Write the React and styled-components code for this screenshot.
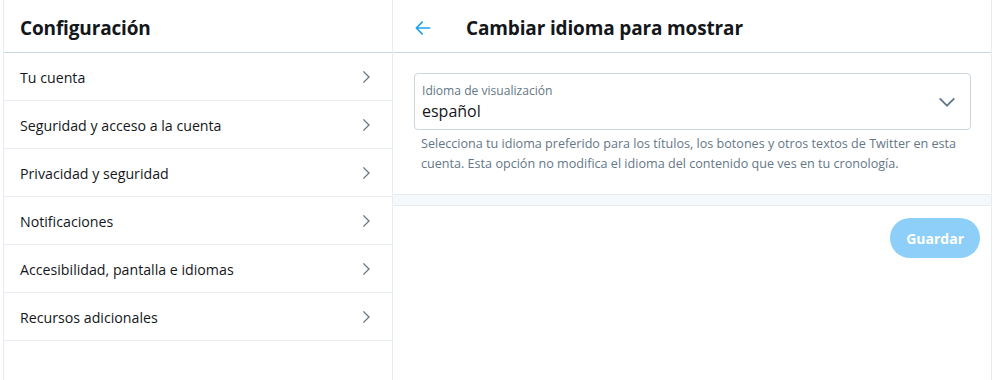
import React from 'react'
import styled, { createGlobalStyle } from 'styled-components'

const GlobalStyle = createGlobalStyle`
  html, body {
    margin: 0;
    padding: 0;
    background: #fff;
  }
  body {
    font-family: "Open Sans", "Noto Sans", sans-serif;
    color: #14171a;
  }
`

const Page = styled.div`
  display: flex;
  height: 380px;
  padding-left: 3px;
  overflow: hidden;
`

const Sidebar = styled.nav`
  width: 388px;
  border-left: 1px solid #e6ecf0;
  border-right: 1px solid #e6ecf0;
  display: flex;
  flex-direction: column;
`

const Main = styled.main`
  width: 598px;
  border-right: 1px solid #e6ecf0;
  display: flex;
  flex-direction: column;
`

const Header = styled.header`
  height: 53px;
  box-sizing: border-box;
  border-bottom: 1px solid #ccd6dd;
  display: flex;
  align-items: center;
  padding: 4px ${p => p.$pad || 16}px 0;
  gap: 33px;
`

const Title = styled.h2`
  margin: 0;
  font-size: 19px;
  font-weight: 700;
  letter-spacing: -0.15px;
  color: #14171a;
`

const BackButton = styled.button`
  border: 0;
  background: none;
  padding: 0;
  display: flex;
  align-items: center;
  color: #1da1f2;
  cursor: pointer;
`

const NavRow = styled.a`
  height: 48px;
  box-sizing: border-box;
  border-bottom: 1px solid #e6ecf0;
  display: flex;
  align-items: center;
  justify-content: space-between;
  padding: 1px 17px 0 16px;
  font-size: 14.2px;
  color: #14171a;
  text-decoration: none;
`

const Chevron = styled.svg`
  width: 18px;
  height: 18px;
  color: #657786;
`

const Body = styled.section`
  padding: 20px 20px 20px 21px;
  border-bottom: 1px solid #e6ecf0;
`

const SelectBox = styled.div`
  height: 55px;
  border: 1px solid #ccd6dd;
  border-radius: 4px;
  display: flex;
  align-items: center;
  justify-content: space-between;
  padding: 0 12px 0 7px;
`

const SelectText = styled.div`
  display: flex;
  flex-direction: column;
  padding-top: 2px;
`

const SelectLabel = styled.span`
  font-size: 12.1px;
  color: #657786;
  line-height: 16px;
`

const SelectValue = styled.span`
  font-size: 16px;
  color: #14171a;
  line-height: 24px;
`

const Help = styled.p`
  margin: 4px 0 0;
  padding-left: 7px;
  font-size: 12.6px;
  line-height: 20px;
  color: #657786;
`

const Band = styled.div`
  height: 10px;
  background: #f5f8fa;
  border-bottom: 1px solid #e6ecf0;
`

const Actions = styled.div`
  display: flex;
  justify-content: flex-end;
  padding: 12px 11px 0 0;
`

const SaveButton = styled.button`
  height: 40px;
  padding: 0 16px;
  border: 0;
  border-radius: 20px;
  background: #1da1f2;
  opacity: 0.5;
  color: #fff;
  font-family: inherit;
  font-size: 14px;
  font-weight: 700;
`

const items = [
  'Tu cuenta',
  'Seguridad y acceso a la cuenta',
  'Privacidad y seguridad',
  'Notificaciones',
  'Accesibilidad, pantalla e idiomas',
  'Recursos adicionales'
]

const RightIcon = () => (
  <Chevron viewBox='0 0 24 24' fill='none' stroke='currentColor' strokeWidth='1.8'>
    <path d='M8.5 4.5 L16 12 L8.5 19.5' />
  </Chevron>
)

export default function App () {
  return (
    <>
      <GlobalStyle />
      <Page>
        <Sidebar>
          <Header>
            <Title>Configuración</Title>
          </Header>
          {items.map(item => (
            <NavRow key={item} href='#'>
              <span>{item}</span>
              <RightIcon />
            </NavRow>
          ))}
        </Sidebar>
        <Main>
          <Header $pad={20}>
            <BackButton aria-label='Atrás'>
              <svg width='20' height='20' viewBox='0 0 24 24' fill='none' stroke='currentColor' strokeWidth='2' strokeLinecap='round' strokeLinejoin='round'>
                <path d='M20 12H4.5M11 5l-7 7 7 7' />
              </svg>
            </BackButton>
            <Title>Cambiar idioma para mostrar</Title>
          </Header>
          <Body>
            <SelectBox>
              <SelectText>
                <SelectLabel>Idioma de visualización</SelectLabel>
                <SelectValue>español</SelectValue>
              </SelectText>
              <Chevron viewBox='0 0 24 24' fill='none' stroke='currentColor' strokeWidth='2' style={{ width: 22, height: 22 }}>
                <path d='M4 8l8 8 8-8' />
              </Chevron>
            </SelectBox>
            <Help>
              Selecciona tu idioma preferido para los títulos, los botones y otros textos de Twitter en esta cuenta. Esta opción no modifica el idioma del contenido que ves en tu cronología.
            </Help>
          </Body>
          <Band />
          <Actions>
            <SaveButton>Guardar</SaveButton>
          </Actions>
        </Main>
      </Page>
    </>
  )
}
